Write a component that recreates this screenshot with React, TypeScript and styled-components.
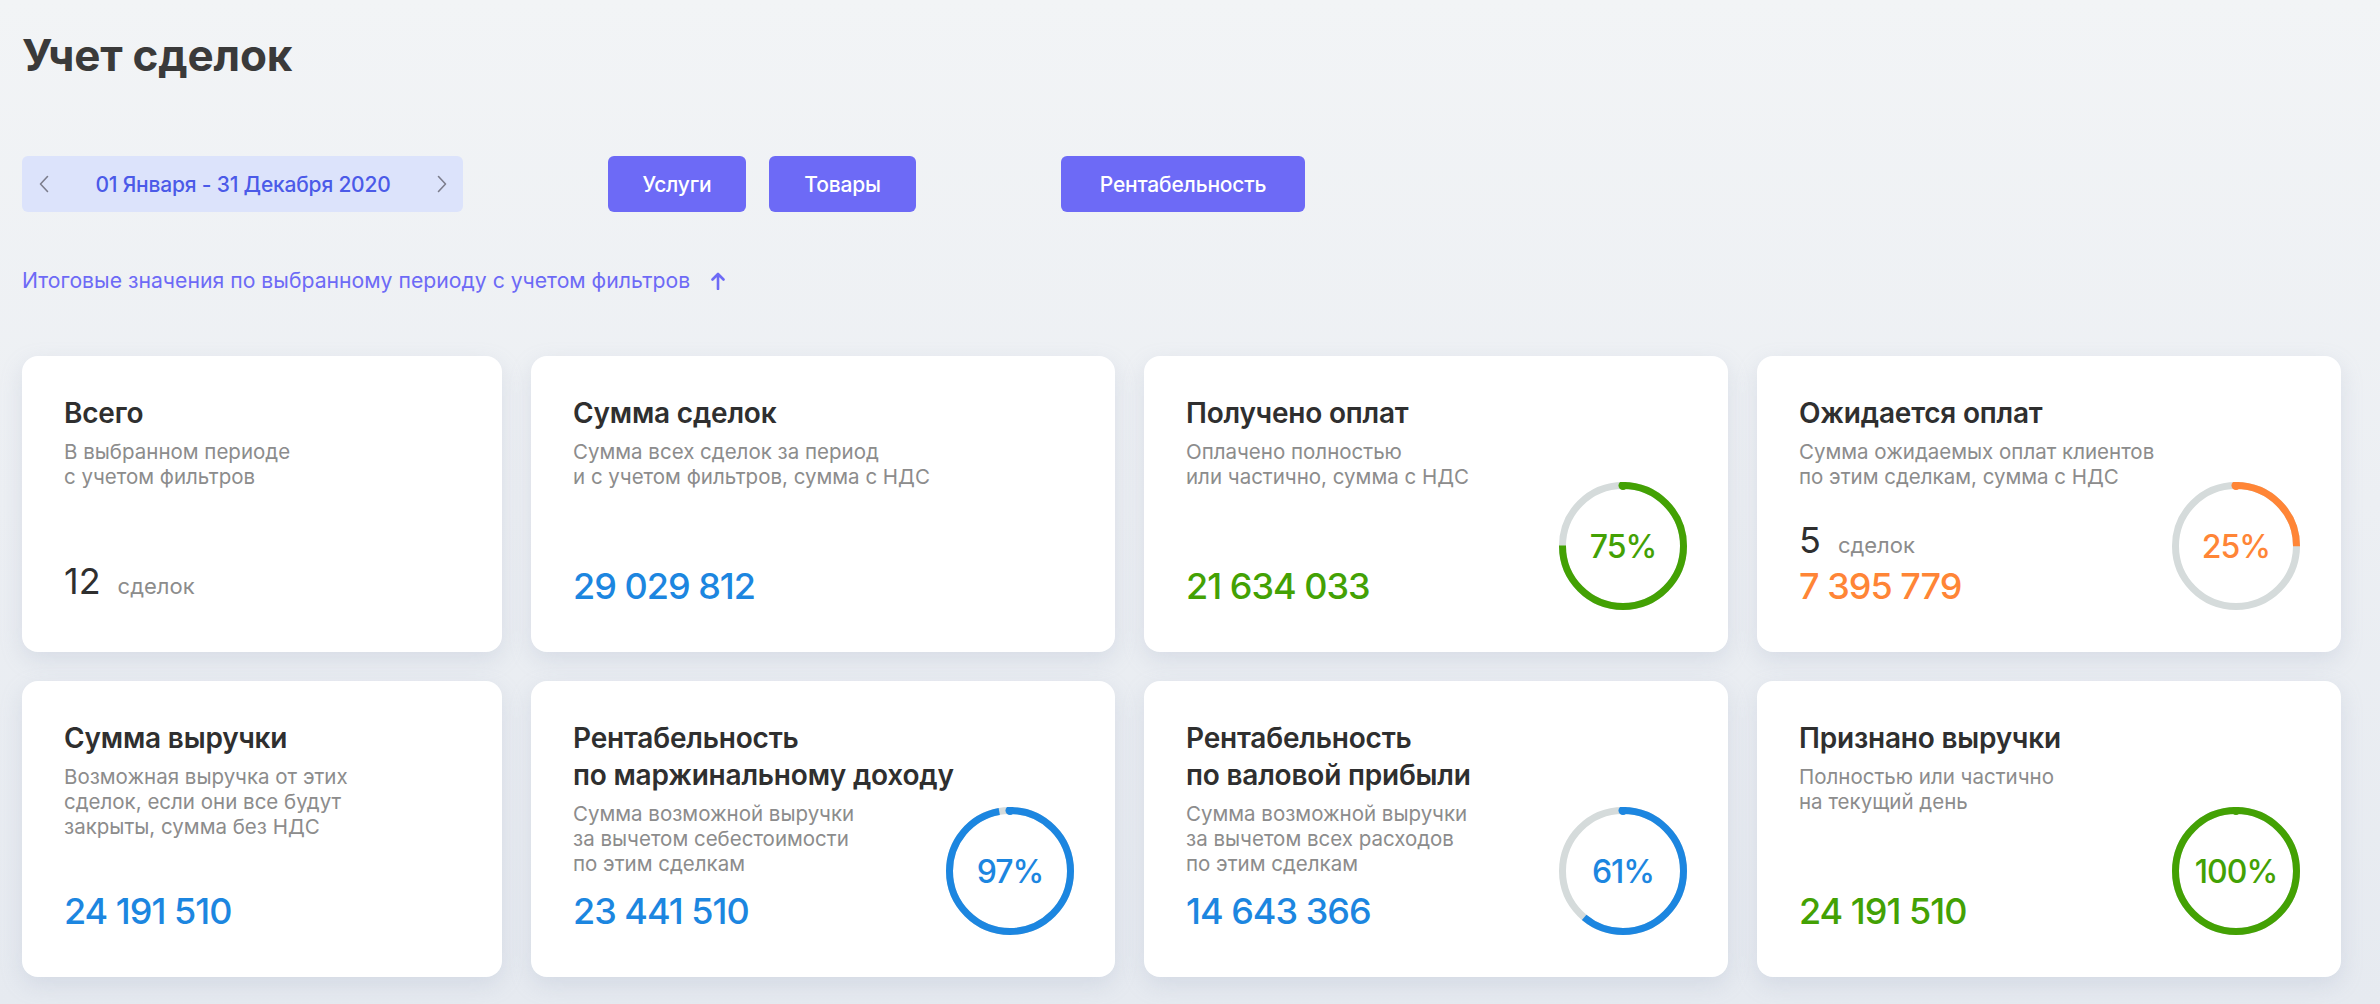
import styled, { createGlobalStyle } from "styled-components";
import { Fragment } from "react";

const GlobalStyle = createGlobalStyle`
  html, body {
    margin: 0;
    padding: 0;
  }
  body {
    font-family: Inter, "Noto Sans", sans-serif;
    background: linear-gradient(180deg, #f2f4f6 0%, #e6eaf0 100%);
    min-height: 100vh;
  }
  * {
    box-sizing: border-box;
  }
`;

const COLORS = {
  blue: "#1c86e0",
  green: "#43a104",
  orange: "#ff8536",
  track: "#d5dbdb",
  dark: "#2f2f2f",
  muted: "#8c8c8c",
  accent: "#6d6af6",
};

const Page = styled.div`
  padding: 29px 39px 20px 22px;
`;

const PageTitle = styled.h1`
  margin: 0;
  font-size: 44px;
  line-height: 53px;
  font-weight: 700;
  color: #3a3a3a;
  letter-spacing: -0.2px;
`;

const Toolbar = styled.div`
  display: flex;
  align-items: center;
  gap: 145px;
  margin-top: 74px;
`;

const DatePicker = styled.div`
  width: 441px;
  height: 56px;
  display: flex;
  align-items: center;
  justify-content: space-between;
  padding: 0 15px 0 16px;
  background: #dce3fb;
  border-radius: 6px;
`;

const DateText = styled.span`
  font-size: 21px;
  font-weight: 500;
  color: #4b5ae8;
  letter-spacing: -0.2px;
`;

const Chevron = styled.button`
  display: flex;
  align-items: center;
  justify-content: center;
  width: 12px;
  height: 20px;
  padding: 0;
  border: none;
  background: none;
  color: #7c7d8c;
`;

const ButtonGroup = styled.div`
  display: flex;
  gap: 23px;
`;

const FilterButton = styled.button<{ $width: number }>`
  width: ${({ $width }) => $width}px;
  height: 56px;
  border: none;
  border-radius: 6px;
  background: ${COLORS.accent};
  color: #fff;
  font-family: inherit;
  font-size: 21px;
  font-weight: 500;
  letter-spacing: -0.2px;
`;

const Summary = styled.div`
  display: flex;
  align-items: center;
  gap: 21px;
  margin-top: 56px;
  font-size: 21.2px;
  line-height: 25px;
  color: ${COLORS.accent};
`;

const Grid = styled.div`
  display: grid;
  grid-template-columns: 480px repeat(3, minmax(0, 1fr));
  grid-auto-rows: 296px;
  gap: 29px;
  margin-top: 63px;
`;

const Card = styled.div`
  display: grid;
  grid-template-columns: minmax(0, 1fr) auto;
  grid-template-rows: auto auto 1fr;
  padding: 39px 41px 44px 42px;
  background: #fff;
  border-radius: 16px;
  box-shadow: 0 8px 22px rgba(145, 160, 185, 0.22);
`;

const CardTitle = styled.div`
  grid-column: 1 / -1;
  font-size: 28px;
  line-height: 37px;
  font-weight: 600;
  color: ${COLORS.dark};
  letter-spacing: -0.2px;
`;

const CardDesc = styled.div`
  grid-column: 1;
  margin-top: 7px;
  font-size: 20.5px;
  line-height: 25px;
  color: ${COLORS.muted};
  white-space: nowrap;
`;

const ValueBlock = styled.div`
  grid-column: 1;
  grid-row: 3;
  align-self: end;
`;

const CountRow = styled.div<{ $stacked?: boolean }>`
  display: flex;
  align-items: baseline;
  gap: 17px;
  line-height: ${({ $stacked }) => ($stacked ? "39px" : "43px")};
`;

const CountNumber = styled.span`
  font-size: 36px;
  color: ${COLORS.dark};
`;

const CountLabel = styled.span`
  font-size: 22px;
  color: ${COLORS.muted};
`;

const Value = styled.div<{ $color: string }>`
  font-size: 36px;
  line-height: 43px;
  font-weight: 500;
  color: ${({ $color }) => $color};
  letter-spacing: -1px;
`;

const RingWrap = styled.div`
  grid-column: 2;
  grid-row: 2 / 4;
  align-self: end;
  position: relative;
  width: 128px;
  height: 128px;
  margin-bottom: -2px;
`;

const RingLabel = styled.div<{ $color: string }>`
  position: absolute;
  inset: 0;
  display: flex;
  align-items: center;
  justify-content: center;
  font-size: 32px;
  font-weight: 500;
  color: ${({ $color }) => $color};
  letter-spacing: -1px;
`;

const Ring = ({ percent, color }: { percent: number; color: string }) => {
  const r = 60.5;
  const len = 2 * Math.PI * r;
  return (
    <RingWrap>
      <svg width="128" height="128" viewBox="0 0 128 128">
        <circle cx="64" cy="64" r={r} fill="none" stroke={COLORS.track} strokeWidth="7" />
        <circle
          cx="64"
          cy="64"
          r={r}
          fill="none"
          stroke={color}
          strokeWidth="7"
          strokeDasharray={`${(len * percent) / 100} ${len}`}
          transform="rotate(-90 64 64)"
        />
        <circle cx="64" cy="3.5" r="4.5" fill={color} />
      </svg>
      <RingLabel $color={color}>{percent}%</RingLabel>
    </RingWrap>
  );
};

type CardData = {
  title: string[];
  desc: string[];
  value?: string;
  color?: string;
  count?: number;
  percent?: number;
};

const cards: CardData[] = [
  {
    title: ["Всего"],
    desc: ["В выбранном периоде", "с учетом фильтров"],
    count: 12,
  },
  {
    title: ["Сумма сделок"],
    desc: ["Сумма всех сделок за период", "и с учетом фильтров, сумма с НДС"],
    value: "29 029 812",
    color: COLORS.blue,
  },
  {
    title: ["Получено оплат"],
    desc: ["Оплачено полностью", "или частично, сумма с НДС"],
    value: "21 634 033",
    color: COLORS.green,
    percent: 75,
  },
  {
    title: ["Ожидается оплат"],
    desc: ["Сумма ожидаемых оплат клиентов", "по этим сделкам, сумма с НДС"],
    count: 5,
    value: "7 395 779",
    color: COLORS.orange,
    percent: 25,
  },
  {
    title: ["Сумма выручки"],
    desc: ["Возможная выручка от этих", "сделок, если они все будут", "закрыты, сумма без НДС"],
    value: "24 191 510",
    color: COLORS.blue,
  },
  {
    title: ["Рентабельность", "по маржинальному доходу"],
    desc: ["Сумма возможной выручки", "за вычетом себестоимости", "по этим сделкам"],
    value: "23 441 510",
    color: COLORS.blue,
    percent: 97,
  },
  {
    title: ["Рентабельность", "по валовой прибыли"],
    desc: ["Сумма возможной выручки", "за вычетом всех расходов", "по этим сделкам"],
    value: "14 643 366",
    color: COLORS.blue,
    percent: 61,
  },
  {
    title: ["Признано выручки"],
    desc: ["Полностью или частично", "на текущий день"],
    value: "24 191 510",
    color: COLORS.green,
    percent: 100,
  },
];

const lines = (items: string[]) =>
  items.map((line, i) => (
    <Fragment key={i}>
      {i > 0 && <br />}
      {line}
    </Fragment>
  ));

const StatCard = ({ data }: { data: CardData }) => (
  <Card>
    <CardTitle>{lines(data.title)}</CardTitle>
    <CardDesc>{lines(data.desc)}</CardDesc>
    <ValueBlock>
      {data.count !== undefined && (
        <CountRow $stacked={!!data.value}>
          <CountNumber>{data.count}</CountNumber>
          <CountLabel>сделок</CountLabel>
        </CountRow>
      )}
      {data.value && <Value $color={data.color!}>{data.value}</Value>}
    </ValueBlock>
    {data.percent !== undefined && <Ring percent={data.percent} color={data.color!} />}
  </Card>
);

export default function App() {
  return (
    <>
      <GlobalStyle />
      <Page>
        <PageTitle>Учет сделок</PageTitle>
        <Toolbar>
          <DatePicker>
            <Chevron aria-label="prev">
              <svg width="10" height="18" viewBox="0 0 10 18">
                <path d="M8.5 1.5 1.5 9l7 7.5" fill="none" stroke="currentColor" strokeWidth="1.6" strokeLinecap="round" strokeLinejoin="round" />
              </svg>
            </Chevron>
            <DateText>01 Января - 31 Декабря 2020</DateText>
            <Chevron aria-label="next">
              <svg width="10" height="18" viewBox="0 0 10 18">
                <path d="M1.5 1.5 8.5 9l-7 7.5" fill="none" stroke="currentColor" strokeWidth="1.6" strokeLinecap="round" strokeLinejoin="round" />
              </svg>
            </Chevron>
          </DatePicker>
          <ButtonGroup>
            <FilterButton $width={138}>Услуги</FilterButton>
            <FilterButton $width={147}>Товары</FilterButton>
          </ButtonGroup>
          <FilterButton $width={244}>Рентабельность</FilterButton>
        </Toolbar>
        <Summary>
          Итоговые значения по выбранному периоду с учетом фильтров
          <svg width="14" height="18" viewBox="0 0 14 18">
            <path d="M7 17V2M1.5 7.5 7 2l5.5 5.5" fill="none" stroke="currentColor" strokeWidth="2.6" strokeLinecap="round" strokeLinejoin="round" />
          </svg>
        </Summary>
        <Grid>
          {cards.map((c, i) => (
            <StatCard key={i} data={c} />
          ))}
        </Grid>
      </Page>
    </>
  );
}
